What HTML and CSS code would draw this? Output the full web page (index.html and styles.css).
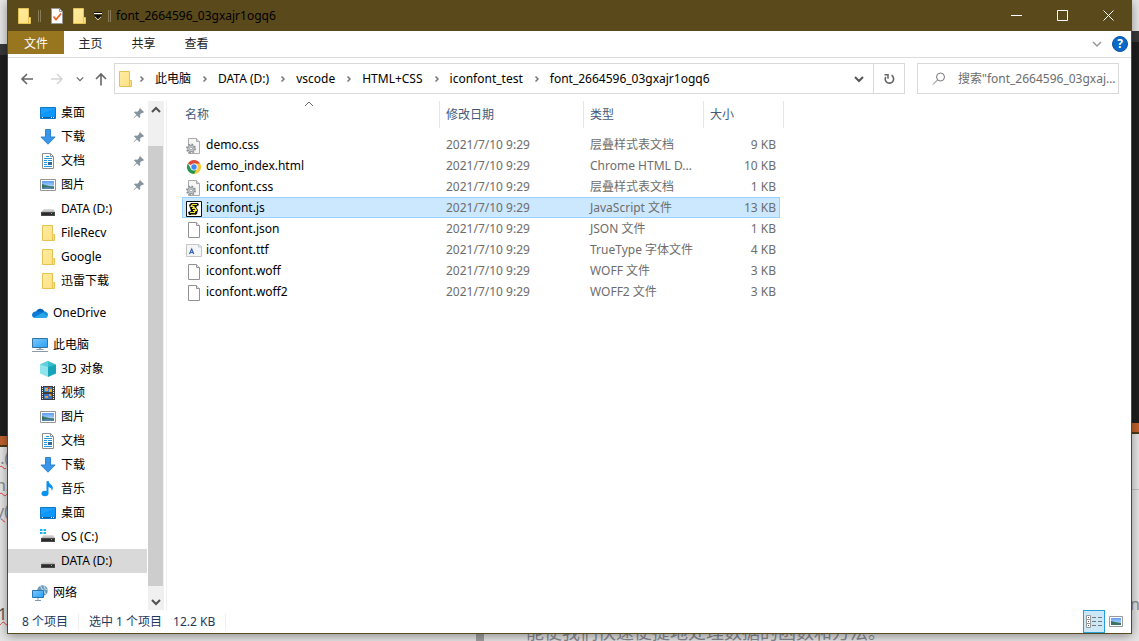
FILE: index.html
```html
<!DOCTYPE html>
<html lang="zh-CN">
<head>
<meta charset="utf-8">
<title>font_2664596_03gxajr1ogq6</title>
<link rel="stylesheet" href="styles.css">
</head>
<body>
<svg class="sprite" aria-hidden="true">
  <defs>
    <linearGradient id="gFolder" x1="0" y1="0" x2="1" y2="1"><stop offset="0" stop-color="#ffeba0"/><stop offset="1" stop-color="#ffe083"/></linearGradient>
    <linearGradient id="gScreen" x1="0" y1="0" x2="1" y2="1"><stop offset="0" stop-color="#7cc8ff"/><stop offset="1" stop-color="#27a0f5"/></linearGradient>
    <linearGradient id="gDrive" x1="0" y1="0" x2="0" y2="1"><stop offset="0" stop-color="#e4e4e4"/><stop offset="1" stop-color="#a8a8a8"/></linearGradient>
    <linearGradient id="gSky" x1="0" y1="0" x2="0" y2="1"><stop offset="0" stop-color="#5d9cf0"/><stop offset="1" stop-color="#d4ecfa"/></linearGradient>
  </defs>
  <symbol id="folder" viewBox="0 0 16 16"><path d="M2.500.5h10v9h2v6h-12z" fill="url(#gFolder)" stroke="#e6c350"/><path d="M12.500 10v5.500" stroke="#e6c350"/></symbol>
  <symbol id="desktop" viewBox="0 0 16 16"><path d="M.5 2.500h15v11H.5z" fill="#1e9fff" stroke="#0b79c2"/><path d="M1 9l14-5v8H1z" fill="#0d96fb"/><path d="M1 12.500h14" stroke="#0b62b0"/><path d="M2 12.500h1M11 12.500h1M13 12.500h1" stroke="#fff"/></symbol>
  <symbol id="download" viewBox="0 0 16 16"><path d="M5.500.5h5v7.500h4.600L8 15.200.9 8h4.600z" fill="#3a97e8" stroke="#2f84d2"/></symbol>
  <symbol id="doc" viewBox="0 0 16 16"><path d="M2.500.5h8l3 3v12h-11z" fill="#fff" stroke="#8b8f92"/><path d="M10.500.5v3h3" fill="none" stroke="#8b8f92"/><path d="M4 5h8v1H4zM6 3h3v1H6zM4 7h3v1H4zM8 7h4v1H8zM4 9h3v1H4zM4 11h3v1H4zM4 13h8v1H4z" fill="#1e96e0"/><path d="M8 9h4v3H8z" fill="#356a98"/></symbol>
  <symbol id="picture" viewBox="0 0 16 16"><path d="M.5 2.500h15v11H.5z" fill="#fff" stroke="#969696"/><path d="M2 4h12v8H2z" fill="url(#gSky)"/><path d="M2 7l3 1 4 1 5 .5V12H2z" fill="#387567"/><path d="M2 11l5-1 7 1v1H2z" fill="#5488ae"/></symbol>
  <symbol id="drive" viewBox="0 0 16 16"><path d="M3.500 8h10l1.500 3.500H1z" fill="url(#gDrive)"/><path d="M1 11h14v4H1z" fill="#4a4a4a"/><path d="M2 12h12v2H2z" fill="#2c2c2c"/><path d="M11 12h1v1h-1z" fill="#55e06a"/></symbol>
  <symbol id="osdrive" viewBox="0 0 16 16"><path d="M0 0h2.500v2H0zM3.500 0H6v2H3.500zM0 3h2.500v2H0zM3.500 3H6v2H3.500z" fill="#14b5ec"/><path d="M3.500 6h10L15 9.500H1z" fill="url(#gDrive)"/><path d="M1 9h14v4H1z" fill="#4a4a4a"/><path d="M2 10h12v2H2z" fill="#2c2c2c"/><path d="M11 10h1v1h-1z" fill="#55e06a"/></symbol>
  <symbol id="onedrive" viewBox="0 0 16 16"><path d="M4 7a4.500 4.500 0 0 1 8.500-.5L8 10z" fill="#0364b8"/><path d="M3.500 6.500C1.500 6.700 0 8 0 10c0 2 1.500 3 3.500 3L11 8.500C9 6.500 6 6 3.500 6.500z" fill="#0f7ad4"/><path d="M10 8c1-1.500 3-1.800 4-1 1.200.4 2 1.500 2 3l-1 2z" fill="#1490df"/><path d="M2 12.500L10 8l5.700 3.500c-.5 1-1.400 1.500-2.700 1.500H3.500z" fill="#28a8ea"/></symbol>
  <symbol id="pc" viewBox="0 0 16 16"><path d="M.5 1.500h15v9H.5z" fill="url(#gScreen)" stroke="#35749f"/><path d="M7 11h2v1.500H7z" fill="#9ba9b3"/><path d="M4.500 12.500h7M0 14.500h16" stroke="#8b9ba6"/></symbol>
  <symbol id="cube" viewBox="0 0 16 16"><path d="M8 0l8 3.500-8 4-8-4z" fill="#38bccb"/><path d="M8 0v7L0 3.500z" fill="#62cfdc"/><path d="M0 3.500L8 6v10l-8-3.500z" fill="#8fe4ec"/><path d="M8 6l8-2.500v9L8 16z" fill="#16a5b8"/></symbol>
  <symbol id="video" viewBox="0 0 16 16"><path d="M1 1h14v14H1z" fill="#3c3c3c"/><path d="M2.500 1v14M13.500 1v14" stroke="#eee" stroke-dasharray="1 1"/><path d="M4 2h8v5H4z" fill="#3b84c9"/><path d="M5 3h3v3H5zM9 4h3v3H9z" fill="#e9ab31"/><path d="M8 2h2v2H8z" fill="#bc3931"/><path d="M4 9h8v5H4z" fill="#3f73bd"/><path d="M5 11h3v2H5zM9 9h2v2H9z" fill="#df9f3b"/></symbol>
  <symbol id="music" viewBox="0 0 16 16"><path d="M7.500.5v11" stroke="#0b91ee" stroke-width="2"/><ellipse cx="5" cy="12.500" rx="3.500" ry="2.700" fill="#0b91ee"/><path d="M7 0h1.500c.5 3 4.500 4 4.300 7 0 1-.5 2-1 3 0-3-2-4-4-4z" fill="#0b91ee"/></symbol>
  <symbol id="network" viewBox="0 0 16 16"><circle cx="10.500" cy="5.500" r="5.300" fill="#6899b8"/><path d="M8 1c2 1 1 3 3 4s1 3 3 4M12 1l1 3 3 1" fill="none" stroke="#b9d8e4" stroke-width="1.200"/><path d="M.5 5.500h11v7H.5z" fill="url(#gScreen)" stroke="#2777b4"/><path d="M6 13v2M3 15.500h6" stroke="#8399aa"/></symbol>
  <symbol id="pin" viewBox="0 0 12 12"><path d="M7 1l4 4-1 1-1-.3-2 2 .2 2.300-1 1L4 8.500.8 11.300.5 11l2.900-3.200L1 5.600l1-1 2.400.2 2-2L6.100 1.900z" fill="#8795a1"/></symbol>
  <symbol id="page" viewBox="0 0 16 16"><path d="M2.500.5h8l3 3v12h-11z" fill="#fff" stroke="#929292"/><path d="M10.500.5v3h3" fill="#eee" stroke="#929292"/></symbol>
  <symbol id="css" viewBox="0 0 16 16"><path d="M2.500.5h8l3 3v12h-11z" fill="#f6f6f6" stroke="#aaa"/><path d="M10.500.5v3h3" fill="#ddd" stroke="#aaa"/><circle cx="5" cy="10.500" r="4" fill="#d6d9dc" stroke="#8b9095" stroke-width="2" stroke-dasharray="1.600 1.540"/><circle cx="5" cy="10.500" r="3.200" fill="#d6d9dc" stroke="#94999d"/><circle cx="5" cy="10.500" r="1.500" fill="#fff" stroke="#94999d"/></symbol>
  <symbol id="chrome" viewBox="0 0 16 16"><circle cx="8" cy="8" r="7" fill="#fff"/><path d="M8 8L1.900 4.500a7 7 0 0 1 12.200 0z" fill="#df4938"/><path d="M8 8V4.500h6.100A7 7 0 0 1 8 15z" fill="#fcc934"/><path d="M8 15A7 7 0 0 1 1.900 4.500L5.200 10 11 9.800z" fill="#24964d"/><circle cx="8" cy="8" r="3.500" fill="#fff"/><circle cx="8" cy="8" r="2.700" fill="#4285f4"/></symbol>
  <symbol id="script" viewBox="0 0 16 16"><path d="M.5.500h15v15H.5z" fill="#fff" stroke="#111"/><path d="M5 2h7l1 2-3 2 2 3-1 4-2 1H3l-1-3 3-1-1-3-1-3z" fill="#111"/><path d="M6 3h5v1H6zM4.500 5h4v1h-4zM6 7h4v1H6zM7 9h4v1H7zM4 11h5v1H4zM5 13h4v.500H5z" fill="#f5e733"/><path d="M5 4l5 4.500-2 3.500" fill="none" stroke="#f5e733" stroke-width="1.300"/></symbol>
  <symbol id="ttf" viewBox="0 0 16 16"><path d="M.5 1.500h12l3 2v10H.5z" fill="#f3f5f7" stroke="#c4c7ca"/><path d="M12.500 1.500v2.500h3" fill="none" stroke="#c4c7ca"/><path d="M3.500 11L5.700 6l2 5M4.500 9.500h2.300" fill="none" stroke="#3262bd" stroke-width="1.200"/></symbol>
  <symbol id="chev" viewBox="0 0 8 8"><path d="M2.500 1.500L5 4 2.500 6.500" fill="none" stroke="currentColor" stroke-width="1.500"/></symbol>
  <symbol id="down" viewBox="0 0 10 10"><path d="M1 3l4 4 4-4" fill="none" stroke="currentColor" stroke-width="var(--w,1.500)"/></symbol>
  <symbol id="up" viewBox="0 0 10 10"><path d="M1 7l4-4 4 4" fill="none" stroke="currentColor" stroke-width="var(--w,1.500)"/></symbol>
</svg>

<div class="backdrop" aria-hidden="true">
  <div class="editor editor-left"></div>
  <div class="editor editor-right"></div>
  <p class="scrap scrap-a">i.(</p>
  <p class="scrap scrap-b">nz</p>
  <p class="scrap scrap-c">y(</p>
  <p class="scrap scrap-d">1</p>
  <p class="scrap scrap-e">nd</p>
  <div class="rule"></div>
  <div class="block"></div>
  <p class="sentence">能使我们快速便捷地处理数据的函数和方法。</p>
</div>

<main class="window">
  <header class="titlebar">
    <svg class="icon"><use href="#folder"/></svg>
    <span class="sep"></span>
    <button class="quick" aria-label="属性"><svg viewBox="0 0 16 16" class="icon"><path d="M2.500.5h8l3 3v12h-11z" fill="#fff" stroke="#999"/><path d="M10.500.5v3h3" fill="none" stroke="#999"/><path d="M4.500 8.500l2.500 3 5-6" fill="none" stroke="#e8622c" stroke-width="1.800"/></svg></button>
    <button class="quick" aria-label="新建文件夹"><svg class="icon"><use href="#folder"/></svg></button>
    <button class="quick customize" aria-label="自定义快速访问工具栏"><svg viewBox="0 0 8 8" class="tiny"><path d="M0 1.500h8" stroke="#fff"/><path d="M0 .5h8" stroke="#111"/><path d="M0 3h8L4 7z" fill="#111"/><path d="M1 5l3 3 3-3" fill="none" stroke="#fff" stroke-width=".7"/></svg></button>
    <span class="sep"></span>
    <h1 class="title">font_2664596_03gxajr1ogq6</h1>
    <div class="controls">
      <button aria-label="最小化"><svg viewBox="0 0 11 11"><path d="M0 5.500h11"/></svg></button>
      <button aria-label="最大化"><svg viewBox="0 0 11 11"><path d="M.5.500h10v10H.5z"/></svg></button>
      <button aria-label="关闭"><svg viewBox="0 0 11 11"><path d="M.5.500l10 10M10.500.5l-10 10"/></svg></button>
    </div>
  </header>

  <nav class="ribbon">
    <button class="tab file">文件</button>
    <button class="tab">主页</button>
    <button class="tab">共享</button>
    <button class="tab">查看</button>
    <button class="expand" aria-label="展开功能区"><svg class="small"><use href="#down"/></svg></button>
    <button class="help" aria-label="帮助">?</button>
  </nav>

  <div class="navbar">
    <div class="arrows">
      <button aria-label="后退"><svg viewBox="0 0 14 14"><path d="M13 7H2M7 2L2 7l5 5" fill="none" stroke="#666" stroke-width="1.600"/></svg></button>
      <button class="off" aria-label="前进"><svg viewBox="0 0 14 14"><path d="M1 7h11M7 2l5 5-5 5" fill="none" stroke="#d4d4d4" stroke-width="1.600"/></svg></button>
      <button class="recent" aria-label="最近浏览的位置"><svg class="tiny"><use href="#down"/></svg></button>
      <button aria-label="上移"><svg viewBox="0 0 14 14"><path d="M7 13.500V2M2 7l5-5 5 5" fill="none" stroke="#666" stroke-width="1.600"/></svg></button>
    </div>
    <div class="address">
      <svg class="icon"><use href="#folder"/></svg>
      <svg class="chev"><use href="#chev"/></svg><button class="crumb">此电脑</button>
      <svg class="chev"><use href="#chev"/></svg><button class="crumb">DATA (D:)</button>
      <svg class="chev"><use href="#chev"/></svg><button class="crumb">vscode</button>
      <svg class="chev"><use href="#chev"/></svg><button class="crumb">HTML+CSS</button>
      <svg class="chev"><use href="#chev"/></svg><button class="crumb">iconfont_test</button>
      <svg class="chev"><use href="#chev"/></svg><button class="crumb">font_2664596_03gxajr1ogq6</button>
      <button class="history" aria-label="以前的位置"><svg class="small"><use href="#down"/></svg></button>
      <button class="refresh" aria-label="刷新"><svg viewBox="0 0 14 14"><path d="M9.500 3.300A4.200 4.200 0 1 1 3.800 4.800" fill="none" stroke="#666" stroke-width="1.600"/><path d="M2.500 2.700H6v4" fill="none" stroke="#666" stroke-width="1.500"/></svg></button>
    </div>
    <label class="search">
      <svg viewBox="0 0 14 14"><circle cx="8.500" cy="5" r="4" fill="none" stroke="#777"/><path d="M5.500 8L1 12.500" stroke="#777"/></svg>
      <input type="text" aria-label="搜索" placeholder='搜索"font_2664596_03gxajr1ogq6"'>
    </label>
  </div>

  <div class="content">
    <nav class="tree">
      <ul>
        <li><a href="#"><svg class="icon"><use href="#desktop"/></svg>桌面<svg class="pin"><use href="#pin"/></svg></a></li>
        <li><a href="#"><svg class="icon"><use href="#download"/></svg>下载<svg class="pin"><use href="#pin"/></svg></a></li>
        <li><a href="#"><svg class="icon"><use href="#doc"/></svg>文档<svg class="pin"><use href="#pin"/></svg></a></li>
        <li><a href="#"><svg class="icon"><use href="#picture"/></svg>图片<svg class="pin"><use href="#pin"/></svg></a></li>
        <li><a href="#"><svg class="icon"><use href="#drive"/></svg>DATA (D:)</a></li>
        <li><a href="#"><svg class="icon"><use href="#folder"/></svg>FileRecv</a></li>
        <li><a href="#"><svg class="icon"><use href="#folder"/></svg>Google</a></li>
        <li><a href="#"><svg class="icon"><use href="#folder"/></svg>迅雷下载</a></li>
      </ul>
      <ul>
        <li><a class="root" href="#"><svg class="icon"><use href="#onedrive"/></svg>OneDrive</a></li>
      </ul>
      <ul>
        <li><a class="root" href="#"><svg class="icon"><use href="#pc"/></svg>此电脑</a></li>
        <li><a href="#"><svg class="icon"><use href="#cube"/></svg>3D 对象</a></li>
        <li><a href="#"><svg class="icon"><use href="#video"/></svg>视频</a></li>
        <li><a href="#"><svg class="icon"><use href="#picture"/></svg>图片</a></li>
        <li><a href="#"><svg class="icon"><use href="#doc"/></svg>文档</a></li>
        <li><a href="#"><svg class="icon"><use href="#download"/></svg>下载</a></li>
        <li><a href="#"><svg class="icon"><use href="#music"/></svg>音乐</a></li>
        <li><a href="#"><svg class="icon"><use href="#desktop"/></svg>桌面</a></li>
        <li><a href="#"><svg class="icon"><use href="#osdrive"/></svg>OS (C:)</a></li>
        <li><a class="current" href="#"><svg class="icon"><use href="#drive"/></svg>DATA (D:)</a></li>
      </ul>
      <ul>
        <li><a class="root" href="#"><svg class="icon"><use href="#network"/></svg>网络</a></li>
      </ul>
    </nav>
    <div class="scrollbar">
      <button class="to-top" aria-label="向上滚动"><svg class="small"><use href="#up"/></svg></button>
      <div class="thumb"></div>
      <button class="to-bottom" aria-label="向下滚动"><svg class="small"><use href="#down"/></svg></button>
    </div>
    <section class="files">
      <table>
        <colgroup><col class="c-name"><col class="c-date"><col class="c-type"><col class="c-size"><col class="c-edge"></colgroup>
        <thead>
          <tr><th>名称<svg class="sort"><use href="#up"/></svg></th><th>修改日期</th><th>类型</th><th class="open">大小</th><th></th></tr>
        </thead>
        <tbody>
          <tr><td><svg class="icon"><use href="#css"/></svg>demo.css</td><td>2021/7/10 9:29</td><td>层叠样式表文档</td><td>9 KB</td></tr>
          <tr><td><svg class="icon"><use href="#chrome"/></svg>demo_index.html</td><td>2021/7/10 9:29</td><td>Chrome HTML D...</td><td>10 KB</td></tr>
          <tr><td><svg class="icon"><use href="#css"/></svg>iconfont.css</td><td>2021/7/10 9:29</td><td>层叠样式表文档</td><td>1 KB</td></tr>
          <tr class="selected"><td><svg class="icon"><use href="#script"/></svg>iconfont.js</td><td>2021/7/10 9:29</td><td>JavaScript 文件</td><td>13 KB</td></tr>
          <tr><td><svg class="icon"><use href="#page"/></svg>iconfont.json</td><td>2021/7/10 9:29</td><td>JSON 文件</td><td>1 KB</td></tr>
          <tr><td><svg class="icon"><use href="#ttf"/></svg>iconfont.ttf</td><td>2021/7/10 9:29</td><td>TrueType 字体文件</td><td>4 KB</td></tr>
          <tr><td><svg class="icon"><use href="#page"/></svg>iconfont.woff</td><td>2021/7/10 9:29</td><td>WOFF 文件</td><td>3 KB</td></tr>
          <tr><td><svg class="icon"><use href="#page"/></svg>iconfont.woff2</td><td>2021/7/10 9:29</td><td>WOFF2 文件</td><td>3 KB</td></tr>
        </tbody>
      </table>
    </section>
  </div>

  <footer class="status">
    <span>8 个项目</span>
    <span>选中 1 个项目</span>
    <span>12.2 KB</span>
    <div class="views">
      <button class="on" aria-label="详细信息"><svg viewBox="0 0 16 14"><path d="M.5.500h4v4h-4zM.5 4.500h4v4h-4zM.5 8.500h4v4h-4z" fill="#fff" stroke="#999"/><path d="M2 2.500h1M2 6.500h1M2 10.500h1" stroke="#555"/><path d="M6 2.500h4M12 2.500h4M6 6.500h4M12 6.500h4M6 10.500h4M12 10.500h4" stroke="#777"/></svg></button>
      <button aria-label="大缩略图"><svg viewBox="0 0 14 11"><path d="M.5.500h13v10H.5z" fill="#fff" stroke="#999"/><path d="M2 2h10v7H2z" fill="url(#gSky)"/><path d="M2 5l4 1 6 1v2H2z" fill="#387567"/></svg></button>
    </div>
  </footer>
</main>
</body>
</html>
```
FILE: styles.css
```css
* { box-sizing: border-box; }

body {
  margin: 0;
  height: 100vh;
  padding: 0 7px 7px 7px;
  display: flex;
  overflow: hidden;
  background: #e6e6e6;
  color: #000;
  font: 12px/16px "Noto Sans", "Noto Sans CJK SC", sans-serif;
}

button, input { font: inherit; color: inherit; }
button { margin: 0; padding: 0; border: 0; background: none; display: flex; align-items: center; justify-content: center; }
svg { flex: none; }
ul { list-style: none; margin: 0; padding: 0; }
a { color: inherit; text-decoration: none; }

.sprite { position: absolute; width: 0; height: 0; }
.icon { width: 16px; height: 16px; }
.small { width: 10px; height: 10px; }
.tiny { width: 8px; height: 8px; }

/* Desktop behind the window */
.backdrop { position: absolute; inset: 0; overflow: hidden; color: #8a8a94; }
.editor { position: absolute; width: 20px; background: #1e1e1e; border-bottom: 2px solid #4a3c14; }
.editor::before { content: ""; display: block; height: 11px; background: #383838; }
.editor::after { content: ""; position: absolute; left: 0; right: 0; bottom: 0; height: 9px; background: #c0622f; }
.editor-left { left: 0; top: 44px; height: 403px; }
.editor-right { right: 0; top: 31px; height: 403px; }
.scrap { position: absolute; margin: 0; font-size: 16px; line-height: 20px; }
.scrap-a, .scrap-b, .scrap-c, .scrap-d { left: -4px; text-decoration: underline wavy #e03a3a 1px; }
.scrap-a { top: 448px; }
.scrap-b { top: 475px; }
.scrap-c { top: 501px; }
.scrap-d { top: 604px; left: -2px; color: #555; }
.scrap-e { top: 594px; left: calc(100% - 9px); }
.rule { position: absolute; right: 0; top: 489px; width: 12px; height: 1px; background: #c4c4c4; }
.block { position: absolute; left: 476px; bottom: 0; width: 8px; height: 12px; background: #a0a0a0; }
.sentence { position: absolute; left: 526px; bottom: -3px; margin: 0; font-size: 18px; line-height: 24px; white-space: nowrap; }

.window {
  position: relative;
  flex: 1;
  min-width: 0;
  display: flex;
  flex-direction: column;
  background: #fff;
  border: 1px solid #5a491b;
  border-top: 0;
  box-shadow: 0 2px 10px rgba(0, 0, 0, .4);
}

/* Title bar */
.titlebar { display: flex; align-items: center; height: 31px; padding-left: 8px; background: #5a491b; }
.sep { width: 3px; height: 12px; border: 1px solid #8a7c58; border-width: 0 1px; }
.titlebar > .sep { margin: 0 8px 0 6px; }
.quick { margin-right: 6px; }
.customize { width: 10px; height: 16px; margin-right: 0; }
.titlebar > .customize + .sep { margin: 0 5px; }
.title { margin: 0; font-size: 12px; font-weight: 400; }
.controls { margin-left: auto; display: flex; align-self: stretch; }
.controls button { width: 46px; }
.controls svg { width: 11px; height: 11px; fill: none; stroke: #fff; }

/* Ribbon tabs */
.ribbon { display: flex; align-items: flex-start; height: 27px; border-bottom: 1px solid #dcdcdc; }
.tab { width: 53px; height: 23px; padding-top: 2px; color: #222; }
.file { width: 56px; background: #98751f; color: #fff; }
.expand { margin-left: auto; width: 24px; height: 26px; color: #999; }
.help { width: 16px; height: 16px; margin: 5px 3px; border-radius: 8px; background: #0a68c8; border: 1px solid #0b52a0; color: #fff; font-weight: 700; }

/* Navigation bar */
.navbar { display: flex; height: 42px; padding: 5px 12px 6px 10px; }
.arrows { display: flex; align-items: center; width: 96px; color: #666; }
.arrows button { width: 18px; height: 24px; }
.arrows svg:not(.tiny) { width: 14px; height: 14px; }
.arrows .off { margin-left: 12px; }
.arrows .recent { margin-left: 6px; width: 16px; }
.arrows .recent + button { margin-left: 4px; }
.address { flex: 1; display: flex; align-items: center; min-width: 0; border: 1px solid #d9d9d9; padding-left: 2px; }
.address .icon { margin-right: 5px; }
.chev { width: 8px; height: 8px; color: #777; }
.crumb { padding: 0 10px 0 9px; white-space: nowrap; }
.history { margin-left: auto; width: 28px; height: 100%; color: #555; --w: 2; }
.refresh { width: 31px; height: 100%; border-left: 1px solid #d9d9d9; }
.refresh svg { width: 14px; height: 14px; }
.search { display: flex; align-items: center; width: 202px; margin-left: 12px; border: 1px solid #d9d9d9; padding: 0 2px 0 14px; gap: 12px; }
.search svg { width: 14px; height: 14px; }
.search input { flex: 1; min-width: 0; padding: 0; border: 0; outline: 0; background: none; text-overflow: ellipsis; }
.search input::placeholder { color: #6d6d6d; opacity: 1; }

/* Folder tree */
.content { flex: 1; display: flex; min-height: 0; }
.tree { width: 140px; flex: none; overflow: hidden; padding-top: 1px; }
.tree ul + ul { margin-top: 8px; }
.tree a { display: flex; align-items: center; height: 24px; width: 139px; padding-left: 32px; gap: 5px; white-space: nowrap; }
.tree .root { padding-left: 24px; }
.tree .current { background: #d9d9d9; }
.pin { width: 12px; height: 12px; margin-left: auto; margin-right: 2px; }

.scrollbar { display: flex; flex-direction: column; width: 16px; flex: none; margin-top: 1px; background: #f0f0f0; color: #505050; --w: 2; }
.to-top, .to-bottom { width: 15px; height: 17px; }
.thumb { flex: 1; width: 15px; margin: 28px 0 7px; background: #cdcdcd; }

/* File list */
.files { flex: 1; min-width: 0; margin: 1px 0 0 2px; padding-left: 15px; border-left: 1px solid #f0f0f0; }
table { width: 602px; table-layout: fixed; border-collapse: separate; border-spacing: 0; }
.c-name { width: 258px; }
.c-date { width: 144px; }
.c-type { width: 120px; }
.c-size { width: 76px; }
.c-edge { width: 4px; }
th, td { padding: 0 0 0 6px; text-align: left; font-weight: 400; white-space: nowrap; }
th { position: relative; height: 27px; border-right: 1px solid #e5e5e5; color: #43597a; }
th.open { border-right: 0; }
th:first-child { padding-left: 3px; }
th:last-child { padding: 0; }
.sort { position: absolute; top: -2px; left: 122px; width: 10px; height: 10px; color: #666; --w: 1; }
tbody::before { content: ""; display: block; height: 6px; }
td { height: 21px; line-height: 19px; border: 0 solid transparent; border-width: 1px 0; color: #6d6d6d; }
td:first-child { padding-left: 3px; border-left-width: 1px; color: #000; }
td:nth-child(4) { text-align: right; padding-right: 3px; border-right-width: 1px; }
td .icon { vertical-align: -4px; margin: -1px 4px -1px 0; }
.selected td { background: #cce8ff; border-color: #99d1ff; }

/* Status bar */
.status { display: flex; align-items: center; height: 23px; padding-left: 14px; color: #1e395b; }
.status span { padding-right: 10px; }
.status span + span { border-left: 1px solid transparent; }
.status span:nth-child(2) { border-left-color: #eee; padding-left: 10px; }
.status span:nth-child(3) { border-right: 1px solid #eee; }
.views { display: flex; margin-left: auto; padding-right: 4px; align-self: stretch; }
.views button { width: 22px; }
.views .on { background: #cce8f6; border: 1px solid #26a0da; }
.views svg { width: 14px; height: 11px; }
.views .on svg { width: 16px; height: 14px; }
```
